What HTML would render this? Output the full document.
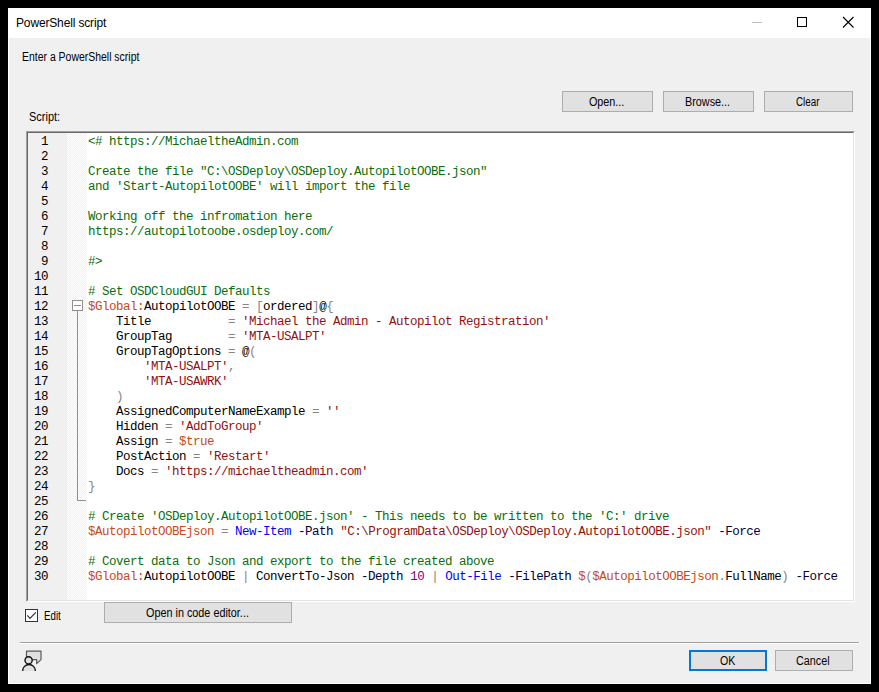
<!DOCTYPE html>
<html><head><meta charset="utf-8">
<style>
*{box-sizing:border-box;margin:0;padding:0}
html,body{width:879px;height:692px;background:#000;overflow:hidden}
body{position:relative;font-family:"Liberation Sans",sans-serif;font-size:11px;color:#000}
.abs{position:absolute}
#win{position:absolute;left:8px;top:8px;width:863px;height:676px;background:#f0f0f0;border:1px solid #fff}
#title{position:absolute;left:0;top:0;width:861px;height:29px;background:#fff}
.t{position:absolute;white-space:pre;line-height:12px}
.lb{position:absolute;white-space:pre;font-size:12px;line-height:14px;transform-origin:0 0;color:#000}
.btn{position:absolute;background:#e1e1e1;border:1px solid #adadad;text-align:center;white-space:pre;line-height:12px}
#edo{position:absolute;left:26px;top:131px;width:829px;height:471px;border-top:1px solid #a0a0a0;border-left:1px solid #a0a0a0;border-right:1px solid #fff;border-bottom:1px solid #fff}
#ed{position:absolute;left:27px;top:132px;width:827px;height:469px;border-top:1px solid #696969;border-left:1px solid #696969;border-right:1px solid #e3e3e3;border-bottom:1px solid #e3e3e3;background:#fff}
#gut{position:absolute;left:28px;top:133px;width:39px;height:467px;background:#f0f0f0}
#fold{position:absolute;left:67px;top:133px;width:20px;height:467px;background-color:#fff;background-image:repeating-conic-gradient(#f0f0f0 0 25%,#fff 0 50%);background-size:2px 2px}
.ln{position:absolute;left:28px;width:20px;text-align:right;font-family:"Liberation Mono",monospace;font-size:12.5px;letter-spacing:-0.5px;line-height:15px;color:#000;white-space:pre}
#code{position:absolute;left:88px;top:135px;font-family:"Liberation Mono",monospace;font-size:12.5px;letter-spacing:-0.5px;line-height:15px;white-space:pre;color:#000}
.c{color:#0a6e0a}.s{color:#941010}.v{color:#c84a18}.o{color:#868686}.k{color:#0000ff}.p{color:#00003c}.n{color:#800080}
</style></head><body>
<div id="win">
  <div id="title"></div>
</div>
<div class="t" style="left:16px;top:16px;font-size:12px;line-height:14px;color:#000;letter-spacing:-0.15px">PowerShell script</div>
<!-- title buttons -->
<div class="abs" style="left:752px;top:22px;width:10px;height:1px;background:#c0c0c0"></div>
<div class="abs" style="left:797px;top:17px;width:10px;height:10px;border:1px solid #000"></div>
<svg class="abs" style="left:842px;top:16px" width="13" height="13" viewBox="0 0 13 13"><path d="M1 1L11.5 11.5M11.5 1L1 11.5" stroke="#000" stroke-width="1.1" fill="none"/></svg>

<div class="lb" style="left:22.38px;top:50px;transform:scaleX(0.871)">Enter a PowerShell script</div>

<div class="btn" style="left:562px;top:91px;width:91px;height:21px;padding-top:4px;text-indent:-2px"></div><!--Open...-->
<div class="btn" style="left:663px;top:91px;width:91px;height:21px;padding-top:4px;letter-spacing:-0.15px"></div><!--Browse...-->
<div class="btn" style="left:764px;top:91px;width:89px;height:21px;padding-top:4px;letter-spacing:-0.5px"></div><!--Clear-->

<div class="lb" style="left:29.34px;top:110px;transform:scaleX(0.914)">Script:</div>

<div id="edo"></div>
<div id="ed"></div>
<div id="gut"></div>
<div id="fold"></div>
<div class="ln" style="top:135px">1
2
3
4
5
6
7
8
9
10
11
12
13
14
15
16
17
18
19
20
21
22
23
24
25
26
27
28
29
30</div>
<!-- fold markers -->
<div class="abs" style="left:72px;top:300px;width:11px;height:11px;border:1px solid #909090;background:#fff"></div>
<div class="abs" style="left:74px;top:305px;width:7px;height:1px;background:#909090"></div>
<div class="abs" style="left:77px;top:311px;width:1px;height:190px;background:#909090"></div>
<div class="abs" style="left:77px;top:500px;width:9px;height:1px;background:#909090"></div>

<div id="code"><span class="c">&lt;# https://MichaeltheAdmin.com</span>

<span class="c">Create the file "C:\OSDeploy\OSDeploy.AutopilotOOBE.json"</span>
<span class="c">and 'Start-AutopilotOOBE' will import the file</span>

<span class="c">Working off the infromation here</span>
<span class="c">https://autopilotoobe.osdeploy.com/</span>

<span class="c">#&gt;</span>

<span class="c"># Set OSDCloudGUI Defaults</span>
<span class="v">$Global:</span>AutopilotOOBE <span class="o">=</span> <span class="o">[</span>ordered<span class="o">]</span>@<span class="o">{</span>
    Title           <span class="o">=</span> <span class="s">'Michael the Admin - Autopilot Registration'</span>
    GroupTag        <span class="o">=</span> <span class="s">'MTA-USALPT'</span>
    GroupTagOptions <span class="o">=</span> @<span class="o">(</span>
        <span class="s">'MTA-USALPT'</span><span class="o">,</span>
        <span class="s">'MTA-USAWRK'</span>
    <span class="o">)</span>
    AssignedComputerNameExample <span class="o">=</span> <span class="s">''</span>
    Hidden <span class="o">=</span> <span class="s">'AddToGroup'</span>
    Assign <span class="o">=</span> <span class="v">$true</span>
    PostAction <span class="o">=</span> <span class="s">'Restart'</span>
    Docs <span class="o">=</span> <span class="s">'https://michaeltheadmin.com'</span>
<span class="o">}</span>

<span class="c"># Create 'OSDeploy.AutopilotOOBE.json' - This needs to be written to the 'C:' drive</span>
<span class="v">$AutopilotOOBEjson</span> <span class="o">=</span> <span class="k">New-Item</span> <span class="p">-Path</span> <span class="s">"C:\ProgramData\OSDeploy\OSDeploy.AutopilotOOBE.json"</span> <span class="p">-Force</span>

<span class="c"># Covert data to Json and export to the file created above</span>
<span class="v">$Global:</span>AutopilotOOBE <span class="o">|</span> ConvertTo-Json <span class="p">-Depth</span> <span class="n">10</span> <span class="o">|</span> <span class="k">Out-File</span> <span class="p">-FilePath</span> <span class="v">$</span><span class="o">(</span><span class="v">$AutopilotOOBEjson</span><span class="o">.</span>FullName<span class="o">)</span> <span class="p">-Force</span></div>

<!-- bottom -->
<div class="abs" style="left:25px;top:609px;width:13px;height:13px;border:1px solid #333;background:#fff"></div>
<svg class="abs" style="left:25px;top:609px" width="13" height="13" viewBox="0 0 13 13"><path d="M2.3 6.4L5 9.3L10.8 3.4" stroke="#333" stroke-width="1.2" fill="none"/></svg>
<div class="lb" style="left:43.69px;top:609px;transform:scaleX(0.812)">Edit</div>
<div class="btn" style="left:104px;top:602px;width:188px;height:21px;padding-top:4px"></div><!--Open in code editor...-->

<div class="abs" style="left:20px;top:642px;width:839px;height:1px;background:#a0a0a0"></div>
<div class="abs" style="left:20px;top:643px;width:839px;height:1px;background:#fff"></div>

<svg class="abs" style="left:15px;top:645px" width="35" height="30" viewBox="0 0 35 30">
  <path d="M11.5 6.1H26V14.6L21.7 18.6V14.6H11.5Z" fill="#e0e0e0" stroke="#5a5a5a" stroke-width="1.2" stroke-linejoin="round"/>
  <path d="M7.6 25.9A6.4 6.4 0 0 1 20.4 25.9" fill="#e0e0e0" stroke="#111" stroke-width="1.4"/>
  <circle cx="13.6" cy="15.3" r="3.6" fill="#e0e0e0" stroke="#111" stroke-width="1.4"/>
</svg>

<div class="btn" style="left:689px;top:650px;width:78px;height:21px;padding-top:4px;border:2px solid #0078d7;padding-top:3px"></div><!--OK-->
<div class="btn" style="left:775px;top:650px;width:78px;height:21px;padding-top:4px"></div><!--Cancel-->
<div class="lb" style="left:588.5px;top:95px;transform:scaleX(0.897)">Open...</div>
<div class="lb" style="left:685.35px;top:95px;transform:scaleX(0.901)">Browse...</div>
<div class="lb" style="left:795.75px;top:95px;transform:scaleX(0.819)">Clear</div>
<div class="lb" style="left:145.5px;top:606px;transform:scaleX(0.902)">Open in code editor...</div>
<div class="lb" style="left:719.5px;top:654px;transform:scaleX(0.882)">OK</div>
<div class="lb" style="left:796.25px;top:654px;transform:scaleX(0.899)">Cancel</div>
</body></html>
